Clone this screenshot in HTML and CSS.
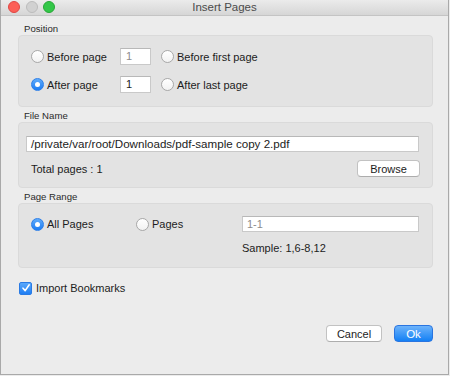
FILE: index.html
```html
<!DOCTYPE html>
<html lang="en">
<head>
    <meta charset="UTF-8">
    <meta name="viewport" content="width=device-width, initial-scale=1.0">
    <title>Insert Pages</title>
    <link rel="stylesheet" href="styles.css">
</head>
<body>
    <div class="window">
        <div class="titlebar">
            <div class="lights">
                <span class="light red"></span>
                <span class="light gray"></span>
                <span class="light green"></span>
            </div>
            <div class="title">Insert Pages</div>
            <div></div>
        </div>

        <div class="content">
            <div class="group-label first">Position</div>
            <div class="group position">
                <div class="pos-row">
                    <label class="radio"><span class="dot"></span>Before page</label>
                    <span class="field num muted">1</span>
                    <label class="radio after-field"><span class="dot"></span>Before first page</label>
                </div>
                <div class="pos-row">
                    <label class="radio"><span class="dot on"></span>After page</label>
                    <span class="field num">1</span>
                    <label class="radio after-field"><span class="dot"></span>After last page</label>
                </div>
            </div>

            <div class="group-label">File Name</div>
            <div class="group file">
                <span class="field path">/private/var/root/Downloads/pdf-sample copy 2.pdf</span>
                <div class="file-row">
                    <span class="total">Total pages : 1</span>
                    <button class="btn browse">Browse</button>
                </div>
            </div>

            <div class="group-label">Page Range</div>
            <div class="group range">
                <div class="range-row">
                    <label class="radio"><span class="dot on"></span>All Pages</label>
                    <label class="radio"><span class="dot"></span>Pages</label>
                    <span class="field muted">1-1</span>
                </div>
                <div class="sample">Sample: 1,6-8,12</div>
            </div>

            <label class="check-row"><span class="check">
                <svg width="10" height="10" viewBox="0 0 10 10"><path d="M2 5.2 L4.2 7.6 L8.2 1.8" fill="none" stroke="#fff" stroke-width="1.6" stroke-linecap="round" stroke-linejoin="round"/></svg>
            </span>Import Bookmarks</label>

            <div class="actions">
                <button class="btn cancel">Cancel</button>
                <button class="btn ok">Ok</button>
            </div>
        </div>
    </div>
</body>
</html>
```

FILE: styles.css
```css
body {
    margin: 0;
    background: #ececec;
    font-family: "Liberation Sans", Arial, sans-serif;
    font-size: 11px;
    color: #1c1c1c;
}
.window {
    width: 449px;
    height: 375px;
    box-sizing: border-box;
    border: 1px solid #a9a9a9;
    border-top: none;
    background: #ececec;
}
.titlebar {
    height: 16px;
    box-sizing: border-box;
    border-bottom: 1px solid #c4c4c4;
    background: linear-gradient(#ebebeb, #d6d6d6);
    display: grid;
    grid-template-columns: 1fr auto 1fr;
    align-items: center;
}
.lights {
    display: flex;
    gap: 5.5px;
    padding-left: 7px;
    margin-top: -1px;
}
.light {
    width: 10px;
    height: 10px;
    border-radius: 50%;
    border: 0.5px solid;
}
.red {
    background: #fc5f57;
    border-color: #df4744;
}
.gray {
    background: #d1d1d1;
    border-color: #bcbcbc;
}
.green {
    background: #33c748;
    border-color: #27a737;
}
.title {
    font-size: 11.5px;
    color: #4b4b4b;
    margin-top: -1px;
}
.content {
    padding: 0 15px 0 17px;
}
.group-label {
    font-size: 9.6px;
    line-height: 12px;
    color: #2a2a2a;
    padding-left: 6px;
    margin-top: 3px;
}
.group-label.first {
    margin-top: 7px;
}
.group {
    background: #e3e3e3;
    border: 1px solid #dadada;
    border-radius: 4px;
}
.position {
    padding: 12px 13px 13px 12px;
    display: flex;
    flex-direction: column;
    gap: 11px;
}
.pos-row {
    display: grid;
    grid-template-columns: 89px 31px 1fr;
    align-items: center;
    height: 17px;
}
.after-field {
    padding-left: 10px;
}
.radio {
    display: flex;
    align-items: center;
    line-height: 14px;
}
.dot {
    width: 13px;
    height: 13px;
    box-sizing: border-box;
    border-radius: 50%;
    border: 1px solid #a8a8a8;
    background: linear-gradient(#ffffff, #f2f2f2);
    margin-right: 3px;
    display: flex;
    align-items: center;
    justify-content: center;
    flex-shrink: 0;
}
.dot.on {
    border-color: #2d7fe8;
    background: linear-gradient(#5fabfb, #1c7cf3);
}
.dot.on::after {
    content: "";
    width: 5px;
    height: 5px;
    border-radius: 50%;
    background: #fff;
}
.field {
    display: block;
    height: 16px;
    box-sizing: border-box;
    background: #fff;
    border: 1px solid #c9c9c9;
    border-top-color: #b8b8b8;
    line-height: 14px;
    padding-left: 4px;
}
.num {
    height: 17px;
    line-height: 15px;
    padding-left: 5px;
}
.muted {
    color: #8c8c8c;
}
.file {
    padding: 13px 13px 10px 7px;
}
.path {
    font-size: 11.6px;
}
.file-row {
    display: flex;
    justify-content: space-between;
    align-items: center;
    margin-top: 8px;
    margin-right: -1px;
}
.total {
    padding-left: 5px;
}
.btn {
    font-family: "Liberation Sans", Arial, sans-serif;
    font-size: 11px;
    height: 17px;
    padding: 0;
    border-radius: 4px;
    border: 1px solid #c2c2c2;
    border-bottom-color: #adadad;
    background: #fff;
    color: #1c1c1c;
}
.browse {
    width: 63px;
}
.range {
    padding: 12px 13px 12px 12px;
}
.range-row {
    display: grid;
    grid-template-columns: 105px 106px 1fr;
    align-items: center;
}
.sample {
    margin-left: 211px;
    margin-top: 9px;
    line-height: 14px;
}
.check-row {
    display: flex;
    align-items: center;
    line-height: 14px;
    margin-top: 13px;
    padding-left: 1px;
}
.check {
    width: 11px;
    height: 11px;
    border-radius: 2px;
    background: linear-gradient(#5aa8fb, #1f7ef3);
    border: 0.5px solid #2a7be4;
    margin-right: 4px;
    display: flex;
    align-items: center;
    justify-content: center;
}
.actions {
    display: flex;
    justify-content: flex-end;
    gap: 12px;
    margin-top: 30px;
}
.cancel {
    width: 56px;
}
.ok {
    width: 39px;
    font-size: 11.5px;
    color: #fff;
    border-color: #2a75e0;
    background: linear-gradient(#6db3fb, #1480f4);
}
```
